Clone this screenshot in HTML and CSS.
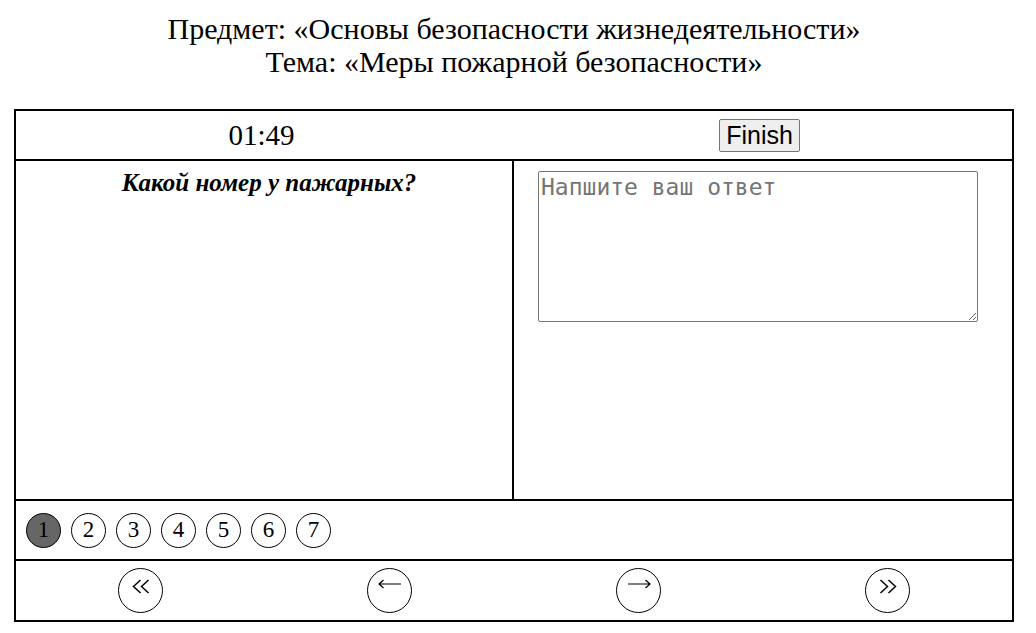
FILE: index.html
```html
<!DOCTYPE html>
<html lang="ru">
<head>
<meta charset="utf-8">
<link rel="stylesheet" href="styles.css">
</head>
<body>
<div class="title">
  <div>Предмет: «Основы безопасности жизнедеятельности»</div>
  <div>Тема: «Меры пожарной безопасности»</div>
</div>
<div class="quiz">
  <div class="top">
    <div class="cell timer">01:49</div>
    <div class="cell"><button class="finish">Finish</button></div>
  </div>
  <div class="body">
    <div class="question">Какой номер у пажарных?</div>
    <div class="answer"><textarea class="input" placeholder="Напшите ваш ответ"></textarea></div>
  </div>
  <div class="pages">
    <span class="num active">1</span>
    <span class="num">2</span>
    <span class="num">3</span>
    <span class="num">4</span>
    <span class="num">5</span>
    <span class="num">6</span>
    <span class="num">7</span>
  </div>
  <div class="nav">
    <div class="navcell"><span class="navbtn">
      <svg class="dbl" width="18" height="15" viewBox="0 0 18 15"><path d="M8.5 1 L1.5 7.5 L8.5 14 M16.5 1 L9.5 7.5 L16.5 14" fill="none" stroke="#000" stroke-width="1.5"/></svg>
    </span></div>
    <div class="navcell"><span class="navbtn">
      <svg class="arrow" width="24" height="10" viewBox="0 0 24 10"><path d="M1 5 H23 M5.5 1 L1 5 L5.5 9" fill="none" stroke="#000" stroke-width="1.2"/></svg>
    </span></div>
    <div class="navcell"><span class="navbtn">
      <svg class="arrow" width="24" height="10" viewBox="0 0 24 10"><path d="M1 5 H23 M18.5 1 L23 5 L18.5 9" fill="none" stroke="#000" stroke-width="1.2"/></svg>
    </span></div>
    <div class="navcell"><span class="navbtn">
      <svg class="dbl" width="18" height="15" viewBox="0 0 18 15"><path d="M1.5 1 L8.5 7.5 L1.5 14 M9.5 1 L16.5 7.5 L9.5 14" fill="none" stroke="#000" stroke-width="1.5"/></svg>
    </span></div>
  </div>
</div>
</body>
</html>
```
FILE: styles.css
```css
html, body { margin: 0; padding: 0; background: #fff; }
body {
  font-family: "Liberation Serif", "Times New Roman", serif;
  color: #000;
  padding: 12px 22px 0 14px;
}
.title {
  text-align: center;
  font-size: 30px;
  line-height: 33px;
  height: 97px;
}
.quiz {
  width: 1000px;
  box-sizing: border-box;
  border: 2px solid #000;
}
.top {
  display: grid;
  grid-template-columns: 1fr 1fr;
  height: 48px;
  border-bottom: 2px solid #000;
}
.cell {
  display: flex;
  align-items: center;
  justify-content: center;
  padding-right: 7px;
}
.timer { font-size: 29px; padding-top: 1px; }
.finish {
  font-family: "Liberation Sans", Arial, sans-serif;
  font-size: 25px;
  padding: 1px 6px;
  background: #efefef;
  border: 1px solid #767676;
  border-radius: 2px;
  color: #000;
  line-height: 29px;
  margin-top: 1px;
}
.body {
  display: grid;
  grid-template-columns: 498px 498px;
  height: 338px;
  border-bottom: 2px solid #000;
}
.question {
  border-right: 2px solid #000;
  text-align: center;
  font-weight: bold;
  font-style: italic;
  font-size: 25px;
  padding: 8px 0 0 10px;
}
.answer { padding: 10px 0 0 24px; }
.input {
  display: block;
  width: 440px;
  height: 151px;
  box-sizing: border-box;
  border: 1px solid #767676;
  border-radius: 2px;
  padding: 2px;
  margin: 0;
  font-family: "DejaVu Sans Mono", "Liberation Mono", monospace;
  font-size: 23px;
  resize: vertical;
}
.input::placeholder { color: #757575; }
.pages {
  display: flex;
  align-items: center;
  gap: 10px;
  padding-left: 10px;
  height: 58px;
  border-bottom: 2px solid #000;
}
.num {
  width: 35px;
  height: 35px;
  box-sizing: border-box;
  border: 1px solid #000;
  border-radius: 50%;
  display: flex;
  align-items: center;
  justify-content: center;
  font-size: 23px;
}
.num.active { background: #666; }
.nav {
  display: grid;
  grid-template-columns: repeat(4, 1fr);
  height: 59px;
}
.navcell {
  display: flex;
  align-items: center;
  justify-content: center;
}
.navbtn {
  width: 45px;
  height: 45px;
  box-sizing: border-box;
  border: 1px solid #000;
  border-radius: 50%;
  display: flex;
  justify-content: center;
  align-items: flex-start;
}
.navbtn .dbl { margin-top: 10px; }
.navbtn .arrow { margin-top: 10px; margin-left: 1px; }
```
